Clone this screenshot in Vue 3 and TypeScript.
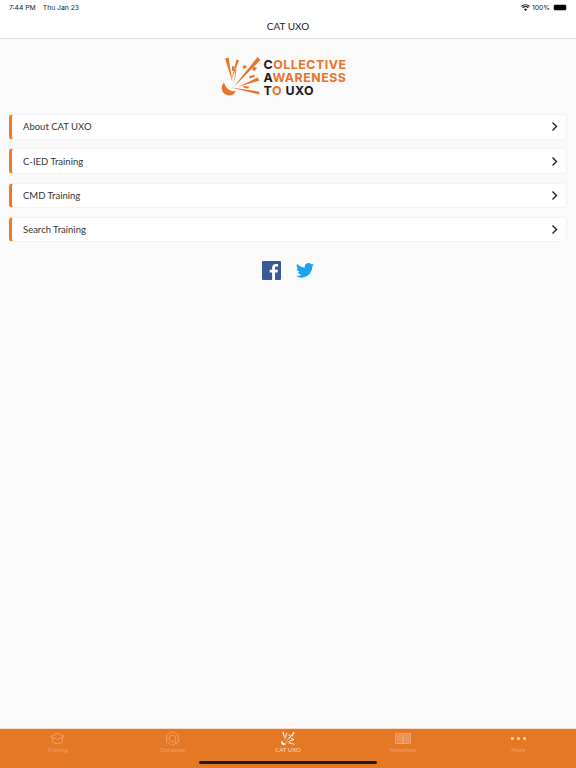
<script setup lang="ts">
const rows: string[] = ['About CAT UXO', 'C-IED Training', 'CMD Training', 'Search Training']
const burst: string[] = [
  'M3 26.500A7.500 7.500 0 1 0 15 35C10 36 5 33 3 26.500z',
  'M4 2.500 7.500 1.500 11.500 26z',
  'M11 10.500 13.500 10 12.500 15 11 15z',
  'M15.500 3.500 18 4.500 10 25z',
  'M36.500 1 39.500 4 12.500 31z',
  'M23 9 26 10.500 23.500 13 21.500 11.500z',
  'M33 10.500 36 12 33.500 15 31 13.500z',
  'M28 20.500 33.500 18.500 33.500 21 28.500 22.500z',
  'M36.500 21.500 38.500 24.500 17 31z',
  'M22 30 28 30.500 27.500 32.500 23 32z',
  'M38 35.500 38.500 38.500 10 31.500z',
  'M14.500 13 15.500 13.500 13 28z',
  'M27 14 28 15 15 29z',
]
</script>

<template>
  <div class="page">
    <header class="top">
      <div class="status">
        <div class="status-left"><span>7:44 PM</span><span>Thu Jan 23</span></div>
        <div class="status-right">
          <svg width="9" height="7" viewBox="0 0 20 15"><path d="M10 15 6.600 11.200a5 5 0 0 1 6.800 0zM4.600 9.100 2.600 7a11 11 0 0 1 14.800 0l-2 2.100a8 8 0 0 0-10.800 0zM1.400 5.600 0 4a15.200 15.200 0 0 1 20 0l-1.400 1.600a13 13 0 0 0-17.200 0z" fill="#111"/></svg>
          <span>100%</span>
          <span class="battery"><i></i></span>
        </div>
      </div>
      <div class="title">CAT UXO</div>
    </header>

    <main class="main">
      <div class="logo">
        <svg width="40" height="41" viewBox="0 0 40 41">
          <path v-for="d in burst" :key="d" :d="d" fill="#e8752a"/>
        </svg>
        <div class="wordmark">
          <div><b>C</b>OLLECTIVE</div>
          <div><b>A</b>WARENESS</div>
          <div><b>T</b>O <b>UXO</b></div>
        </div>
      </div>

      <ul class="list">
        <li v-for="row in rows" :key="row" class="row">
          <span>{{ row }}</span>
          <svg width="8" height="11" viewBox="0 0 8 11"><path d="M1.500 1.500 5.500 5.500 1.500 9.500" fill="none" stroke="#222" stroke-width="1.400"/></svg>
        </li>
      </ul>

      <div class="social">
        <svg width="19" height="19" viewBox="0 0 18 18">
          <rect width="18" height="18" rx="1" fill="#3b5998"/>
          <path d="M12.400 18v-7h2.300l.4-2.700h-2.700V6.600c0-.8.200-1.300 1.300-1.300h1.500V2.900c-.3 0-1.100-.1-2.100-.1-2.100 0-3.500 1.300-3.500 3.600v1.900H7.300V11h2.300v7z" fill="#fff"/>
        </svg>
        <svg width="18" height="15" viewBox="0 0 24 20">
          <path d="M24 2.400a9.800 9.800 0 0 1-2.800.8A4.900 4.900 0 0 0 23.300.5a9.800 9.800 0 0 1-3.100 1.200 4.900 4.900 0 0 0-8.400 4.500A13.900 13.900 0 0 1 1.700.9a4.900 4.900 0 0 0 1.500 6.600 4.900 4.900 0 0 1-2.200-.6 4.900 4.900 0 0 0 3.900 4.900 4.900 4.900 0 0 1-2.200.1 4.900 4.900 0 0 0 4.600 3.400A9.900 9.900 0 0 1 0 17.300 13.900 13.900 0 0 0 7.500 19.500c9.100 0 14.300-7.700 14-14.600A10 10 0 0 0 24 2.400z" fill="#1da1f2"/>
        </svg>
      </div>
    </main>

    <nav class="tabs">
      <div class="tab">
        <svg width="15" height="12" viewBox="0 0 15 12" fill="none" stroke="#f2a878" stroke-width="0.800"><path d="M7.500 .8 14.300 4 7.500 7 .7 4z"/><path d="M2.800 5.200c-.5 1.500-.4 3.300-.2 4.500 2.500 1.800 7.300 1.800 9.800 0 .2-1.200.3-3-.2-4.500"/></svg>
        <span>Training</span>
      </div>
      <div class="tab">
        <svg width="13" height="15" viewBox="0 0 13 15" fill="none" stroke="#f2a878" stroke-width="0.800"><path d="M6.500 .6 12.300 4v7l-5.800 3.400L.7 11V4z"/><circle cx="6.500" cy="7.500" r="3.300"/><path d="M8.500 10l2.500 3.300"/></svg>
        <span>Database</span>
      </div>
      <div class="tab active">
        <svg width="14" height="15" viewBox="0 0 40 41">
          <path v-for="d in burst" :key="d" :d="d" fill="#fff"/>
        </svg>
        <span>CAT UXO</span>
      </div>
      <div class="tab">
        <svg width="16" height="12" viewBox="0 0 16 12" stroke="#f4b083" stroke-width="0.700"><path d="M.5.800h6.700l.8.800v10l-.8-.6H.5zM15.500.800H8.800l-.8.800v10l.8-.6h6.700z" fill="#ea8d4f"/><path d="M2 3.500h4.500M2 5.500h4.500M2 7.500h4.500M9.500 3.500H14M9.500 5.500H14M9.500 7.500H14" fill="none" stroke-width="0.500"/></svg>
        <span>Newsfeed</span>
      </div>
      <div class="tab">
        <div class="dots"><i></i><i></i><i></i></div>
        <span>More</span>
      </div>
      <div class="home"></div>
    </nav>
  </div>
</template>

<style>
html, body { margin: 0; padding: 0; }
</style>

<style scoped>
.page {
  width: 576px;
  height: 768px;
  display: flex;
  flex-direction: column;
  background: #fafafa;
  font-family: Lato, sans-serif;
  overflow: hidden;
}
.top {
  background: #fff;
  border-bottom: 1px solid #dedede;
  height: 38px;
  flex: none;
}
.status {
  height: 14px;
  padding: 0 9px;
  display: flex;
  justify-content: space-between;
  align-items: center;
  font: 6.800px Inter, "Liberation Sans", sans-serif;
  color: #222;
}
.status-left { display: flex; gap: 7px; }
.status-right { display: flex; align-items: center; gap: 2px; }
.battery {
  width: 12px;
  height: 5px;
  border: 0.500px solid #bbb;
  border-radius: 2px;
  display: block;
  margin-left: 1px;
}
.battery i { display: block; height: 100%; background: #000; border-radius: 1px; }
.title {
  text-align: center;
  font-size: 10px;
  line-height: 24px;
  color: #222;
}
.main { flex: 1; padding: 17px 9px 0; display: flex; flex-direction: column; }
.logo {
  display: flex;
  justify-content: center;
  align-items: center;
  gap: 3px;
  height: 41px;
}
.wordmark {
  font: 700 12.400px/13px Inter, "Liberation Sans", sans-serif;
  letter-spacing: 0.500px;
  color: #e8752a;
  width: 92px;
  margin-top: 2px;
  white-space: nowrap;
}
.wordmark b { color: #1a1a1a; font-weight: 700; }
.list {
  list-style: none;
  margin: 17px 0 0;
  padding: 0;
  display: flex;
  flex-direction: column;
  gap: 8.700px;
}
.row {
  height: 25.600px;
  box-sizing: border-box;
  background: #fff;
  border: 1px solid #f3f3f3;
  border-left: 3px solid #f07a26;
  border-radius: 4px;
  padding: 0 7px 0 11px;
  display: flex;
  align-items: center;
  justify-content: space-between;
  font-size: 9.500px;
  color: #333;
}
.social {
  display: flex;
  justify-content: center;
  align-items: center;
  gap: 15px;
  margin-top: 19px;
}
.tabs {
  position: relative;
  flex: none;
  height: 39px;
  background: #e57824;
  border-top: 1px solid #f8dcc8;
  display: grid;
  grid-template-columns: repeat(5, 115.200px);
}
.tab {
  height: 24px;
  padding-top: 2px;
  display: flex;
  flex-direction: column;
  align-items: center;
  font-size: 6px;
  color: #eea06a;
}
.tab svg { height: 15px; display: block; }
.tab span { line-height: 7px; }
.tab.active { color: #fbdcc4; }
.dots { height: 15px; display: flex; gap: 3px; align-items: center; padding-bottom: 1px; box-sizing: border-box; }
.dots i { width: 3px; height: 3px; background: #f8d0b0; border-radius: 1px; display: block; }
.home {
  position: absolute;
  left: 199px;
  bottom: 4px;
  width: 178px;
  height: 3px;
  border-radius: 2px;
  background: #1c1c1c;
}
</style>
